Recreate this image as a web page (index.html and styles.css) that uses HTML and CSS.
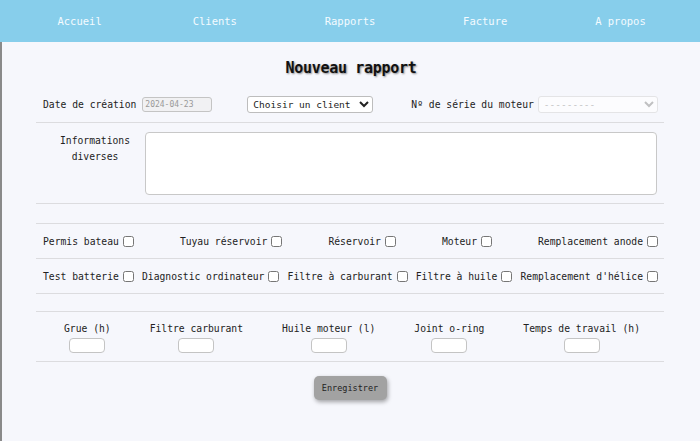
FILE: index.html
```html
<!DOCTYPE html>
<html lang="fr">
<head>
<meta charset="utf-8">
<title>Nouveau rapport</title>
<link rel="stylesheet" href="styles.css">
</head>
<body>
<nav class="nav">
  <a class="nav-item" href="#">Accueil</a>
  <a class="nav-item" href="#">Clients</a>
  <a class="nav-item" href="#">Rapports</a>
  <a class="nav-item" href="#">Facture</a>
  <a class="nav-item" href="#">A propos</a>
</nav>
<main class="main">
  <h1 class="title">Nouveau rapport</h1>
  <form class="form">
    <div class="row row-top">
      <label class="lbl">Date de création</label>
      <input class="date-input" type="text" value="2024-04-23" readonly>
      <select class="sel sel-client">
        <option>Choisir un client</option>
      </select>
      <label class="lbl lbl-serie">Nº de série du moteur</label>
      <select class="sel sel-serie" disabled>
        <option>---------</option>
      </select>
    </div>
    <div class="row row-info">
      <label class="lbl info-lbl">Informations<br>diverses</label>
      <textarea class="info-text"></textarea>
    </div>
    <div class="row spacer"></div>
    <div class="row cb-row">
      <label class="cb">Permis bateau <input type="checkbox"></label>
      <label class="cb">Tuyau réservoir <input type="checkbox"></label>
      <label class="cb">Réservoir <input type="checkbox"></label>
      <label class="cb">Moteur <input type="checkbox"></label>
      <label class="cb">Remplacement anode <input type="checkbox"></label>
    </div>
    <div class="row cb-row">
      <label class="cb">Test batterie <input type="checkbox"></label>
      <label class="cb">Diagnostic ordinateur <input type="checkbox"></label>
      <label class="cb">Filtre à carburant <input type="checkbox"></label>
      <label class="cb">Filtre à huile <input type="checkbox"></label>
      <label class="cb">Remplacement d'hélice <input type="checkbox"></label>
    </div>
    <div class="row spacer spacer-b"></div>
    <div class="row num-row">
      <label class="num">Grue (h)<input class="num-input" type="text"></label>
      <label class="num">Filtre carburant<input class="num-input" type="text"></label>
      <label class="num">Huile moteur (l)<input class="num-input" type="text"></label>
      <label class="num">Joint o-ring<input class="num-input" type="text"></label>
      <label class="num">Temps de travail (h)<input class="num-input" type="text"></label>
    </div>
    <div class="actions">
      <button class="btn" type="button">Enregistrer</button>
    </div>
  </form>
</main>
</body>
</html>
```
FILE: styles.css
```css
* { box-sizing: border-box; }
html, body { margin: 0; padding: 0; }
body {
  background: #f6f7fc;
  font-family: "DejaVu Sans Mono", "Liberation Mono", monospace;
  font-size: 9.7px;
  color: #222;
  height: 441px;
  overflow: hidden;
}
.nav {
  height: 42px;
  background: #87ceeb;
  display: flex;
  align-items: center;
  padding: 0 12px;
}
.nav-item {
  flex: 1;
  text-align: center;
  color: #f4fbff;
  text-decoration: none;
  font-size: 10.5px;
  padding-bottom: 1px;
}
.main {
  border-left: 2px solid #8a8a8a;
  height: 399px;
}
.title {
  margin: 0;
  padding-top: 17px;
  height: 44px;
  text-align: center;
  font-family: "DejaVu Sans Mono", monospace;
  font-size: 15px;
  font-weight: bold;
  color: #111;
  text-shadow: 1px 1px 2px rgba(0,0,0,0.45);
  letter-spacing: -0.3px;
}
.form {
  width: 628px;
  margin: 0 auto;
  position: relative;
  left: -1px;
}
.row {
  border-bottom: 1px solid #dcdcdf;
  display: flex;
  align-items: center;
}
.row-top {
  height: 37px;
  padding-left: 7px;
}
.lbl { color: #222; }
.date-input {
  width: 70px;
  height: 15px;
  margin-left: 6px;
  border: 1px solid #c4c4c4;
  border-radius: 3px;
  background: #f1f1f3;
  color: #999;
  font-family: inherit;
  font-size: 8px;
  padding: 0 2px;
}
.sel {
  height: 17px;
  font-family: inherit;
  font-size: 9.5px;
  border: 1px solid #bdbdbd;
  border-radius: 3px;
  background: #fff;
  color: #222;
  padding: 0 1px;
}
.sel-client { width: 126px; margin-left: 35px; }
.lbl-serie { margin-left: 38px; }
.sel-serie { width: 120px; margin-left: 4px; color: #aaa; border-color: #ddd; }
.row-info {
  height: 81px;
  align-items: flex-start;
  padding: 9px 0 0 9px;
}
.info-lbl {
  width: 100px;
  text-align: center;
  line-height: 16px;
  padding-top: 1px;
}
.info-text {
  width: 512px;
  height: 63px;
  border: 1px solid #c8c8c8;
  border-radius: 4px;
  background: #fff;
  resize: none;
}
.spacer { height: 20px; }
.spacer-b { height: 18px; }
.cb-row {
  height: 35px;
  justify-content: space-between;
  padding: 0 6px 0 7px;
}
.cb {
  display: flex;
  align-items: center;
  white-space: nowrap;
}
.cb input {
  width: 11px;
  height: 11px;
  margin: 0 0 0 4px;
}
.num-row {
  height: 50px;
  justify-content: center;
  gap: 39px;
  align-items: flex-start;
  padding-top: 11px;
  padding-left: 4px;
}
.num {
  display: flex;
  flex-direction: column;
  align-items: center;
  line-height: 12px;
}
.num-input {
  width: 36px;
  height: 15px;
  margin-top: 3px;
  border: 1px solid #c4c4c4;
  border-radius: 4px;
  background: #fff;
}
.actions {
  display: flex;
  justify-content: center;
  padding-top: 14px;
}
.btn {
  width: 73px;
  height: 24px;
  background: #a2a2a2;
  border: none;
  border-radius: 5px;
  font-family: "DejaVu Sans Mono", monospace;
  font-size: 8.5px;
  color: #222;
  box-shadow: 1px 2px 4px rgba(0,0,0,0.35);
}
```
